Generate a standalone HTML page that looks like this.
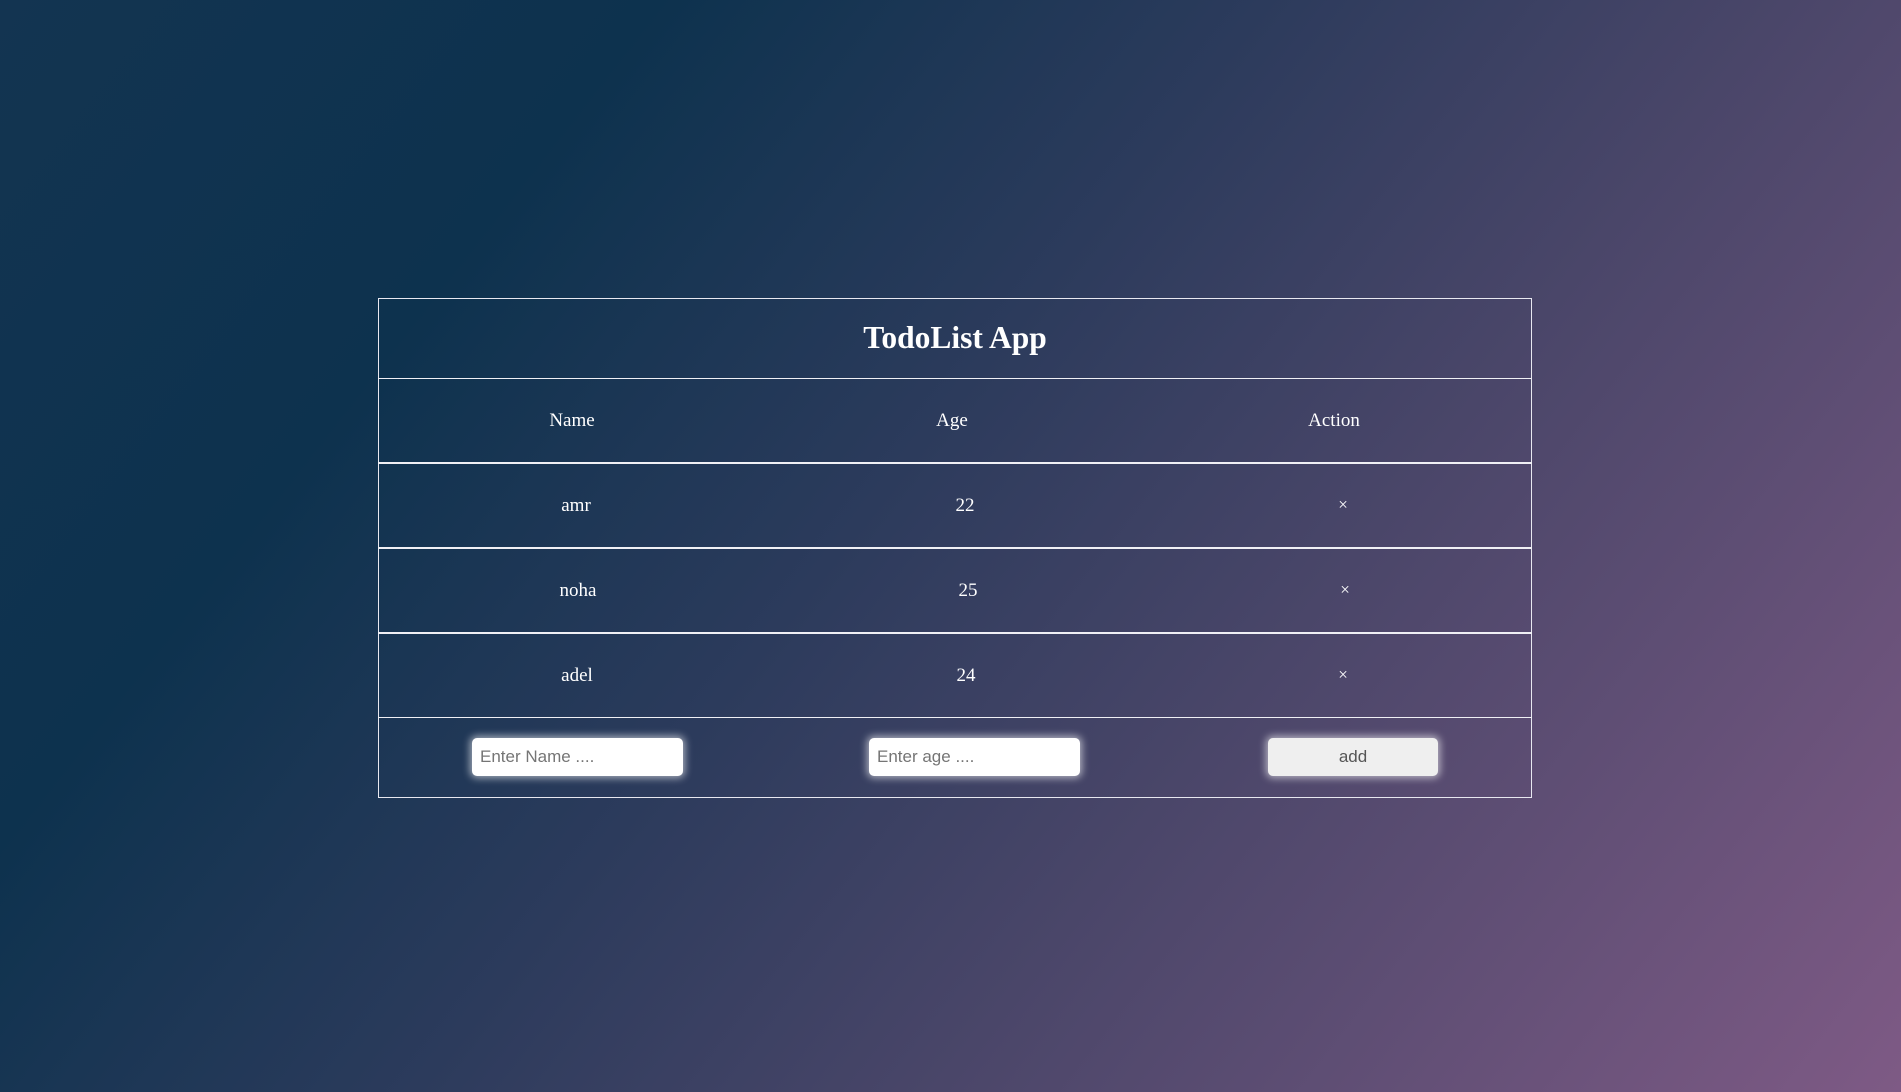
<!DOCTYPE html>
<html><head><style>
html,body{margin:0;padding:0;width:1901px;height:1092px;overflow:hidden}
body{background:linear-gradient(128deg,#133451 0%,#0d324e 24%,#2c3b5c 46%,#4a4669 65%,#7e5a85 100%);position:relative;font-family:"Liberation Serif",serif;color:#fff}
.box{position:absolute;left:378px;top:298px;width:1152px;height:498px;border:1px solid #e8e8f0}
.l{position:absolute;left:378px;width:1154px;background:#f0f0f5}
.t{position:absolute;transform:translate(-50%,-50%);white-space:nowrap;font-size:19px}
.in{position:absolute;top:738px;height:38px;background:#fff;border-radius:5px;box-shadow:0 0 8px 2px rgba(255,255,255,.6);font-family:"Liberation Sans",sans-serif;font-size:17px;color:#757575;line-height:38px;box-sizing:border-box;padding-left:8px}
</style></head><body>
<div class="box"></div>
<div class="l" style="top:378px;height:1px"></div>
<div class="l" style="top:462px;height:2px"></div>
<div class="l" style="top:547px;height:2px"></div>
<div class="l" style="top:632px;height:2px"></div>
<div class="l" style="top:717px;height:1px"></div>
<div class="t" style="left:955px;top:338px;font-size:31.5px;font-weight:bold">TodoList App</div>
<div class="t" style="left:572px;top:421px">Name</div>
<div class="t" style="left:952px;top:421px">Age</div>
<div class="t" style="left:1334px;top:421px">Action</div>
<div class="t" style="left:576px;top:506px">amr</div>
<div class="t" style="left:965px;top:506px">22</div>
<div class="t" style="left:1343px;top:505px;font-size:17px">×</div>
<div class="t" style="left:578px;top:591px">noha</div>
<div class="t" style="left:968px;top:591px">25</div>
<div class="t" style="left:1345px;top:590px;font-size:17px">×</div>
<div class="t" style="left:577px;top:676px">adel</div>
<div class="t" style="left:966px;top:676px">24</div>
<div class="t" style="left:1343px;top:675px;font-size:17px">×</div>
<div class="in" style="left:472px;width:211px">Enter Name ....</div>
<div class="in" style="left:869px;width:211px">Enter age ....</div>
<div class="in" style="left:1268px;width:170px;background:#efefef;color:#555;text-align:center;padding:0">add</div>
</body></html>
